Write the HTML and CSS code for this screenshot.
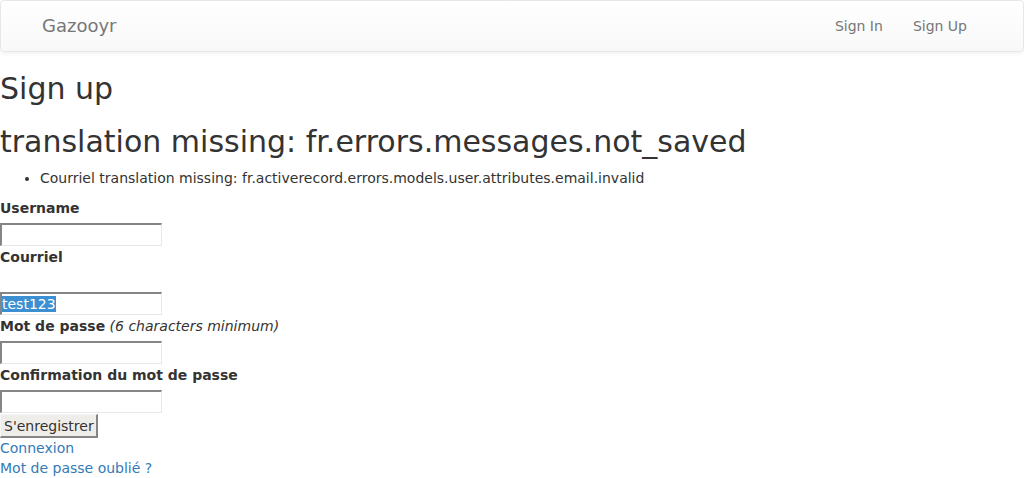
FILE: index.html
```html
<!DOCTYPE html>
<html>
<head>
<meta charset="utf-8">
<link rel="stylesheet" href="styles.css">
</head>
<body>
<nav class="navbar">
  <div class="nav-container">
    <a class="brand" href="#">Gazooyr</a>
    <ul class="nav-links">
      <li><a href="#">Sign In</a></li>
      <li><a href="#">Sign Up</a></li>
    </ul>
  </div>
</nav>
<h2 class="title">Sign up</h2>
<div class="errors">
  <h2 class="title">translation missing: fr.errors.messages.not_saved</h2>
  <ul class="error-list">
    <li>Courriel translation missing: fr.activerecord.errors.models.user.attributes.email.invalid</li>
  </ul>
</div>
<form class="form">
  <div class="field">
    <label class="label">Username</label><br>
    <div class="input"></div>
  </div>
  <div class="field">
    <div class="with-errors"><label class="label">Courriel</label></div><br>
    <div class="with-errors"><div class="input"><span class="selected">test123</span></div></div>
  </div>
  <div class="field">
    <label class="label">Mot de passe</label> <em class="hint">(6 characters minimum)</em><br>
    <div class="input"></div>
  </div>
  <div class="field">
    <label class="label">Confirmation du mot de passe</label><br>
    <div class="input"></div>
  </div>
  <div class="actions">
    <button class="button" type="button">S'enregistrer</button>
  </div>
</form>
<a class="link" href="#">Connexion</a><br>
<a class="link" href="#">Mot de passe oublié ?</a><br>
</body>
</html>
```
FILE: styles.css
```css
html, body {
  margin: 0;
  padding: 0;
}
body {
  font-family: "DejaVu Sans", sans-serif;
  font-size: 14px;
  line-height: 20px;
  color: #333;
  background: #fff;
}
a {
  text-decoration: none;
}
.navbar {
  height: 50px;
  margin-bottom: 20px;
  border: 1px solid #e7e7e7;
  border-radius: 4px;
  background: linear-gradient(to bottom, #fff 0%, #f8f8f8 100%);
  box-shadow: inset 0 1px 0 rgba(255,255,255,.15), 0 1px 5px rgba(0,0,0,.075);
}
.nav-container {
  display: flex;
  justify-content: space-between;
  align-items: center;
  height: 50px;
  padding: 0 41px 0 26px;
}
.brand {
  color: #777;
  font-size: 18px;
  line-height: 20px;
  padding: 15px;
}
.nav-links {
  display: flex;
  list-style: none;
  margin: 0;
  padding: 0;
}
.nav-links a {
  display: block;
  color: #777;
  padding: 15px;
  line-height: 20px;
}
.title {
  font-size: 30px;
  font-weight: 500;
  line-height: 33px;
  margin: 20px 0 10px;
}
.error-list {
  margin: 0 0 10px;
  padding-left: 40px;
}
.form {
  margin: 0;
}
.label {
  display: inline-block;
  font-weight: bold;
  margin-bottom: 5px;
}
.hint {
  font-style: italic;
}
.input {
  box-sizing: border-box;
  width: 162px;
  height: 23px;
  border-style: solid;
  border-width: 2px 1px 1px 2px;
  border-color: #858585 #e8e8e8 #e8e8e8 #858585;
  background: #fff;
  line-height: 20px;
  padding: 0;
  overflow: hidden;
  white-space: nowrap;
  margin-bottom: 1px;
}
.selected {
  background: #3c8fd0;
  color: #fff;
}
.button {
  font-family: "DejaVu Sans", sans-serif;
  font-size: 14px;
  line-height: 18px;
  color: #333;
  background: #efedea;
  border-style: solid;
  border-width: 1px 2px 2px 1px;
  border-color: #f5f5f5 #858585 #858585 #f5f5f5;
  padding: 1px 2px 1px 3px;
  margin: 0;
  height: 24px;
}
.actions {
  line-height: 0;
}
.link {
  color: #337ab7;
}
```
